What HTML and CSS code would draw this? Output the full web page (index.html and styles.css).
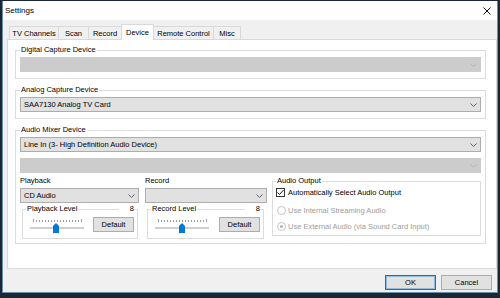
FILE: index.html
```html
<!DOCTYPE html>
<html>
<head>
<meta charset="utf-8">
<link rel="stylesheet" href="styles.css">
</head>
<body>
<div class="window">
  <div class="titlebar">
    <span class="title">Settings</span>
    <svg class="close" width="8" height="8" viewBox="0 0 8 8"><path d="M0.5 0.5L7.5 7.5M7.5 0.5L0.5 7.5" stroke="#111" stroke-width="1" fill="none"/></svg>
  </div>
  <div class="tabs">
    <div class="tab">TV Channels</div>
    <div class="tab">Scan</div>
    <div class="tab">Record</div>
    <div class="tab active">Device</div>
    <div class="tab">Remote Control</div>
    <div class="tab">Misc</div>
  </div>
  <div class="panel">
    <div class="group">
      <div class="group-title"><span>Digital Capture Device</span></div>
      <div class="combo disabled"><span></span><svg class="arrow" width="7" height="4" viewBox="0 0 7 4"><polyline points="0.5,0.5 3.5,3.5 6.5,0.5" fill="none" stroke="#b4b4b4"/></svg></div>
    </div>
    <div class="group">
      <div class="group-title"><span>Analog Capture Device</span></div>
      <div class="combo"><span>SAA7130 Analog TV Card</span><svg class="arrow" width="7" height="4" viewBox="0 0 7 4"><polyline points="0.5,0.5 3.5,3.5 6.5,0.5" fill="none" stroke="#606060"/></svg></div>
    </div>
    <div class="group group-mixer">
      <div class="group-title"><span>Audio Mixer Device</span></div>
      <div class="combo"><span>Line In (3- High Definition Audio Device)</span><svg class="arrow" width="7" height="4" viewBox="0 0 7 4"><polyline points="0.5,0.5 3.5,3.5 6.5,0.5" fill="none" stroke="#606060"/></svg></div>
      <div class="combo disabled"><span></span><svg class="arrow" width="7" height="4" viewBox="0 0 7 4"><polyline points="0.5,0.5 3.5,3.5 6.5,0.5" fill="none" stroke="#b4b4b4"/></svg></div>
      <div class="mixer-row">
        <div class="col col-playback">
          <div class="field-label">Playback</div>
          <div class="combo"><span>CD Audio</span><svg class="arrow" width="7" height="4" viewBox="0 0 7 4"><polyline points="0.5,0.5 3.5,3.5 6.5,0.5" fill="none" stroke="#606060"/></svg></div>
          <div class="level level-playback">
            <div class="level-head"><span class="level-name">Playback Level</span><span class="level-value">8</span></div>
            <div class="level-body">
              <svg class="slider" width="54" height="17" viewBox="0 0 54 17">
                <path d="M3.5 2v3M6.5 3v2M9.5 3v2M12.5 3v2M15.5 3v2M18.5 3v2M21.5 3v2M24.5 3v2M27.5 3v2M30.5 3v2M33.5 3v2M36.5 3v2M39.5 3v2M42.5 3v2M45.5 3v2M48.5 3v2M51.5 2v3" stroke="#9a9a9a" stroke-width="1" fill="none"/>
                <rect x="0" y="10" width="54" height="2" fill="#cfcfcf"/>
                <polygon points="26,6 29,9 29,16 23,16 23,9" fill="#0078d7"/>
              </svg>
              <button class="btn btn-default">Default</button>
            </div>
          </div>
        </div>
        <div class="col col-record">
          <div class="field-label">Record</div>
          <div class="combo"><span></span><svg class="arrow" width="7" height="4" viewBox="0 0 7 4"><polyline points="0.5,0.5 3.5,3.5 6.5,0.5" fill="none" stroke="#606060"/></svg></div>
          <div class="level level-record">
            <div class="level-head"><span class="level-name">Record Level</span><span class="level-value">8</span></div>
            <div class="level-body">
              <svg class="slider" width="54" height="17" viewBox="0 0 54 17">
                <path d="M3.5 2v3M6.5 3v2M9.5 3v2M12.5 3v2M15.5 3v2M18.5 3v2M21.5 3v2M24.5 3v2M27.5 3v2M30.5 3v2M33.5 3v2M36.5 3v2M39.5 3v2M42.5 3v2M45.5 3v2M48.5 3v2M51.5 2v3" stroke="#9a9a9a" stroke-width="1" fill="none"/>
                <rect x="0" y="10" width="54" height="2" fill="#cfcfcf"/>
                <polygon points="27,6 30,9 30,16 24,16 24,9" fill="#0078d7"/>
              </svg>
              <button class="btn btn-default">Default</button>
            </div>
          </div>
        </div>
        <div class="group audio-output">
          <div class="group-title"><span>Audio Output</span></div>
          <div class="option-row">
            <span class="checkbox"><svg width="7" height="7" viewBox="0 0 7 7"><polyline points="0.5,3.5 2.5,5.5 6.5,1" fill="none" stroke="#111" stroke-width="1"/></svg></span>
            <span>Automatically Select Audio Output</span>
          </div>
          <div class="option-row disabled radio-first">
            <span class="radio"></span>
            <span>Use Internal Streaming Audio</span>
          </div>
          <div class="option-row disabled radio-second">
            <span class="radio checked"></span>
            <span>Use External Audio (via Sound Card Input)</span>
          </div>
        </div>
      </div>
    </div>
  </div>
  <div class="footer">
    <button class="btn btn-ok">OK</button>
    <button class="btn btn-cancel">Cancel</button>
  </div>
</div>
</body>
</html>
```

FILE: styles.css
```css
* { box-sizing: border-box; }
html, body { margin: 0; }
body {
  width: 500px;
  height: 298px;
  overflow: hidden;
  background: #1b2734;
  padding: 1px 0 0 2px;
  font-family: "Liberation Sans", Arial, sans-serif;
  font-size: 7.5px;
  color: #000;
}
.window {
  width: 496px;
  background: #f0f0f0;
  border: 1px solid #6d8ea8;
  border-top: none;
}
.titlebar {
  height: 19px;
  background: #fff;
  display: flex;
  align-items: center;
  justify-content: space-between;
  padding: 0 6px 0 2px;
}
.title { font-size: 8px; }
.close { display: block; }

.tabs {
  height: 19px;
  display: flex;
  align-items: flex-end;
  padding-left: 6px;
}
.tab {
  height: 13px;
  display: flex;
  align-items: center;
  justify-content: center;
  background: #f0f0f0;
  border: 1px solid #d9d9d9;
  border-bottom: none;
  border-right: none;
  white-space: nowrap;
}
.tab:last-child { border-right: 1px solid #d9d9d9; }
.tab.active {
  height: 16px;
  margin-bottom: -1px;
  background: #fff;
  border-right: 1px solid #d9d9d9;
  position: relative;
  z-index: 1;
}
.tab.active + .tab { border-left: none; }
.tab:nth-child(1) { width: 49px; }
.tab:nth-child(2) { width: 30px; }
.tab:nth-child(3) { width: 33px; }
.tab:nth-child(4) { width: 33px; }
.tab:nth-child(5) { width: 59px; }
.tab:nth-child(6) { width: 28px; }

.panel {
  height: 230px;
  margin-left: 4px;
  background: #fff;
  border: 1px solid #d9d9d9;
  padding: 10px 10px 0 7px;
  display: flex;
  flex-direction: column;
  gap: 11px;
}
.group {
  border: 1px solid #dcdcdc;
  padding: 0 4px 6px 4px;
}
.group-mixer { padding-bottom: 4px; }
.group-title {
  display: flex;
  height: 10px;
  line-height: 10px;
  margin-top: -6px;
  white-space: nowrap;
}
.group-title span {
  background: #fff;
  padding: 0 1px;
}
.combo {
  height: 15px;
  margin-top: 2px;
  background: #e1e1e1;
  border: 1px solid #adadad;
  display: flex;
  align-items: center;
  justify-content: space-between;
  padding: 0 3px 0 3px;
  white-space: nowrap;
}
.combo.disabled {
  background: #cccccc;
  border-color: #cccccc;
}
.combo + .combo { margin-top: 6px; }
.arrow { display: block; flex: none; }

.mixer-row {
  display: flex;
  align-items: flex-start;
  margin-top: 3px;
}
.col-playback { width: 119px; }
.col-record { width: 122px; margin-left: 6px; }
.field-label {
  height: 10px;
  line-height: 10px;
}
.level {
  margin-top: 6px;
  border: 1px solid #dcdcdc;
  padding: 0 3px 6px 3px;
}
.level-playback { margin-left: 2px; margin-right: 1px; }
.level-record { margin-left: 2px; margin-right: 3px; }
.level-head {
  display: flex;
  justify-content: space-between;
  height: 10px;
  line-height: 10px;
  margin-top: -6px;
}
.level-name { background: #fff; padding: 0 1px; }
.level-value { background: #fff; padding-left: 11px; }
.level-body {
  display: flex;
  justify-content: space-between;
  align-items: flex-start;
  margin-top: 3px;
  height: 15px;
}
.slider {
  display: block;
  margin-left: 4px;
  overflow: visible;
}
.btn {
  font-family: inherit;
  font-size: 7.5px;
  color: #000;
  padding: 0;
  height: 15px;
  background: #e1e1e1;
  border: 1px solid #adadad;
  line-height: 13px;
}
.btn-default { width: 41px; }

.audio-output {
  flex: 1;
  margin-left: 5px;
  margin-top: 5px;
  padding: 0 4px 3px 3px;
}
.option-row {
  height: 12px;
  display: flex;
  align-items: center;
  gap: 3px;
  white-space: nowrap;
}
.option-row.disabled { color: #9c9c9c; gap: 2px; }
.radio-first { margin-top: 6px; }
.radio-second { margin-top: 4px; }
.checkbox {
  width: 9px;
  height: 9px;
  border: 1px solid #333;
  background: #fff;
  display: flex;
  align-items: center;
  justify-content: center;
}
.checkbox svg { display: block; }
.radio {
  width: 9px;
  height: 9px;
  margin-left: 1px;
  border: 1px solid #c4c4c4;
  border-radius: 50%;
  background: #fff;
  display: flex;
  align-items: center;
  justify-content: center;
}
.radio.checked::after {
  content: "";
  width: 3px;
  height: 3px;
  border-radius: 50%;
  background: #b0b0b0;
}

.footer {
  display: flex;
  justify-content: flex-end;
  gap: 5px;
  padding: 6px 5px 2px 0;
}
.btn-ok, .btn-cancel { width: 51px; }
.btn-ok {
  border-color: #0078d7;
  box-shadow: inset 0 0 0 1px rgba(0, 120, 215, 0.35);
}
```
